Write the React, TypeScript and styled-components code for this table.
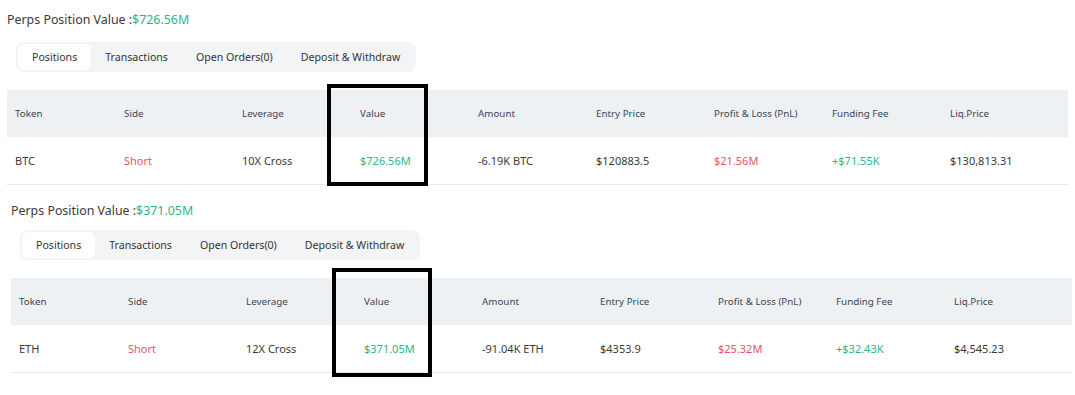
import styled, { createGlobalStyle } from 'styled-components'

const GlobalStyle = createGlobalStyle`
  body {
    margin: 0;
    background: #ffffff;
    font-family: "Noto Sans", "Open Sans", Arial, sans-serif;
    color: #333333;
  }
`;

const Page = styled.div`
  width: 1075px;
  height: 395px;
  overflow: hidden;
`;

const Block = styled.section<{ $shift: number; $top: number }>`
  position: relative;
  margin-top: ${p => p.$top}px;
  padding-left: ${p => 7 + p.$shift}px;
  width: 1061px;
`;

const Title = styled.div<{ $pad: number }>`
  height: 42px;
  padding-top: ${p => p.$pad}px;
  box-sizing: border-box;
  font-size: 12.4px;
  line-height: 18px;
  color: #3a3a3a;
`;

const Green = styled.span`
  color: #2cb58d;
`;

const Tabs = styled.div`
  display: inline-flex;
  margin-left: 9px;
  padding: 2px;
  height: 30px;
  box-sizing: border-box;
  background: #f2f4f6;
  border-radius: 8px;
`;

const Tab = styled.div<{ $active?: boolean }>`
  display: flex;
  align-items: center;
  padding: 0 14px;
  font-size: 10.6px;
  color: #333333;
  border-radius: 6px;
  background: ${p => (p.$active ? '#ffffff' : 'transparent')};
`;

const Table = styled.div`
  margin-top: 18px;
`;

const Row = styled.div<{ $head?: boolean }>`
  display: grid;
  grid-template-columns: 117px repeat(8, 118px);
  height: ${p => (p.$head ? '47px' : '48px')};
  align-items: center;
  background: ${p => (p.$head ? '#eef1f4' : '#ffffff')};
  border-bottom: ${p => (p.$head ? 'none' : '1px solid #e6e8eb')};
  box-sizing: border-box;
  font-size: ${p => (p.$head ? '9.8px' : '11px')};
  color: ${p => (p.$head ? '#3d4450' : '#3a3a3a')};
  & > div:first-child {
    padding-left: 8px;
  }
`;

const Cell = styled.div<{ $tone?: 'up' | 'down' }>`
  white-space: nowrap;
  color: ${p => (p.$tone === 'up' ? '#2cb58d' : p.$tone === 'down' ? '#e4546a' : 'inherit')};
`;

const Marker = styled.div<{ $left: number; $top: number; $w: number; $h: number }>`
  position: absolute;
  left: ${p => p.$left}px;
  top: ${p => p.$top}px;
  width: ${p => p.$w}px;
  height: ${p => p.$h}px;
  border: 4.5px solid #000000;
  box-sizing: border-box;
  pointer-events: none;
`;

const heads = ['Token', 'Side', 'Leverage', 'Value', 'Amount', 'Entry Price', 'Profit & Loss (PnL)', 'Funding Fee', 'Liq.Price'];

interface Position {
  total: string
  token: string
  leverage: string
  amount: string
  entry: string
  pnl: string
  fee: string
  liq: string
  shift: number
  top: number
  titlePad: number
  box: { left: number; top: number; w: number; h: number }
}

const positions: Position[] = [
  {
    total: '$726.56M', token: 'BTC', leverage: '10X Cross', amount: '-6.19K BTC',
    entry: '$120883.5', pnl: '$21.56M', fee: '+$71.55K', liq: '$130,813.31',
    shift: 0, top: 0, titlePad: 11, box: { left: 327, top: 84, w: 101, h: 102 }
  },
  {
    total: '$371.05M', token: 'ETH', leverage: '12X Cross', amount: '-91.04K ETH',
    entry: '$4353.9', pnl: '$25.32M', fee: '+$32.43K', liq: '$4,545.23',
    shift: 4, top: 3, titlePad: 14, box: { left: 332, top: 80, w: 100, h: 109 }
  }
];

function PositionBlock({ p }: { p: Position }) {
  return (
    <Block $shift={p.shift} $top={p.top}>
      <Title $pad={p.titlePad}>Perps Position Value :<Green>{p.total}</Green></Title>
      <Tabs>
        <Tab $active>Positions</Tab>
        <Tab>Transactions</Tab>
        <Tab>Open Orders(0)</Tab>
        <Tab>Deposit &amp; Withdraw</Tab>
      </Tabs>
      <Table>
        <Row $head>
          {heads.map(h => <Cell key={h}>{h}</Cell>)}
        </Row>
        <Row>
          <Cell>{p.token}</Cell>
          <Cell $tone='down'>Short</Cell>
          <Cell>{p.leverage}</Cell>
          <Cell $tone='up'>{p.total}</Cell>
          <Cell>{p.amount}</Cell>
          <Cell>{p.entry}</Cell>
          <Cell $tone='down'>{p.pnl}</Cell>
          <Cell $tone='up'>{p.fee}</Cell>
          <Cell>{p.liq}</Cell>
        </Row>
      </Table>
      <Marker $left={p.box.left} $top={p.box.top} $w={p.box.w} $h={p.box.h} />
    </Block>
  )
}

export default function App() {
  return (
    <Page>
      <GlobalStyle />
      {positions.map(p => <PositionBlock key={p.token} p={p} />)}
    </Page>
  )
}
